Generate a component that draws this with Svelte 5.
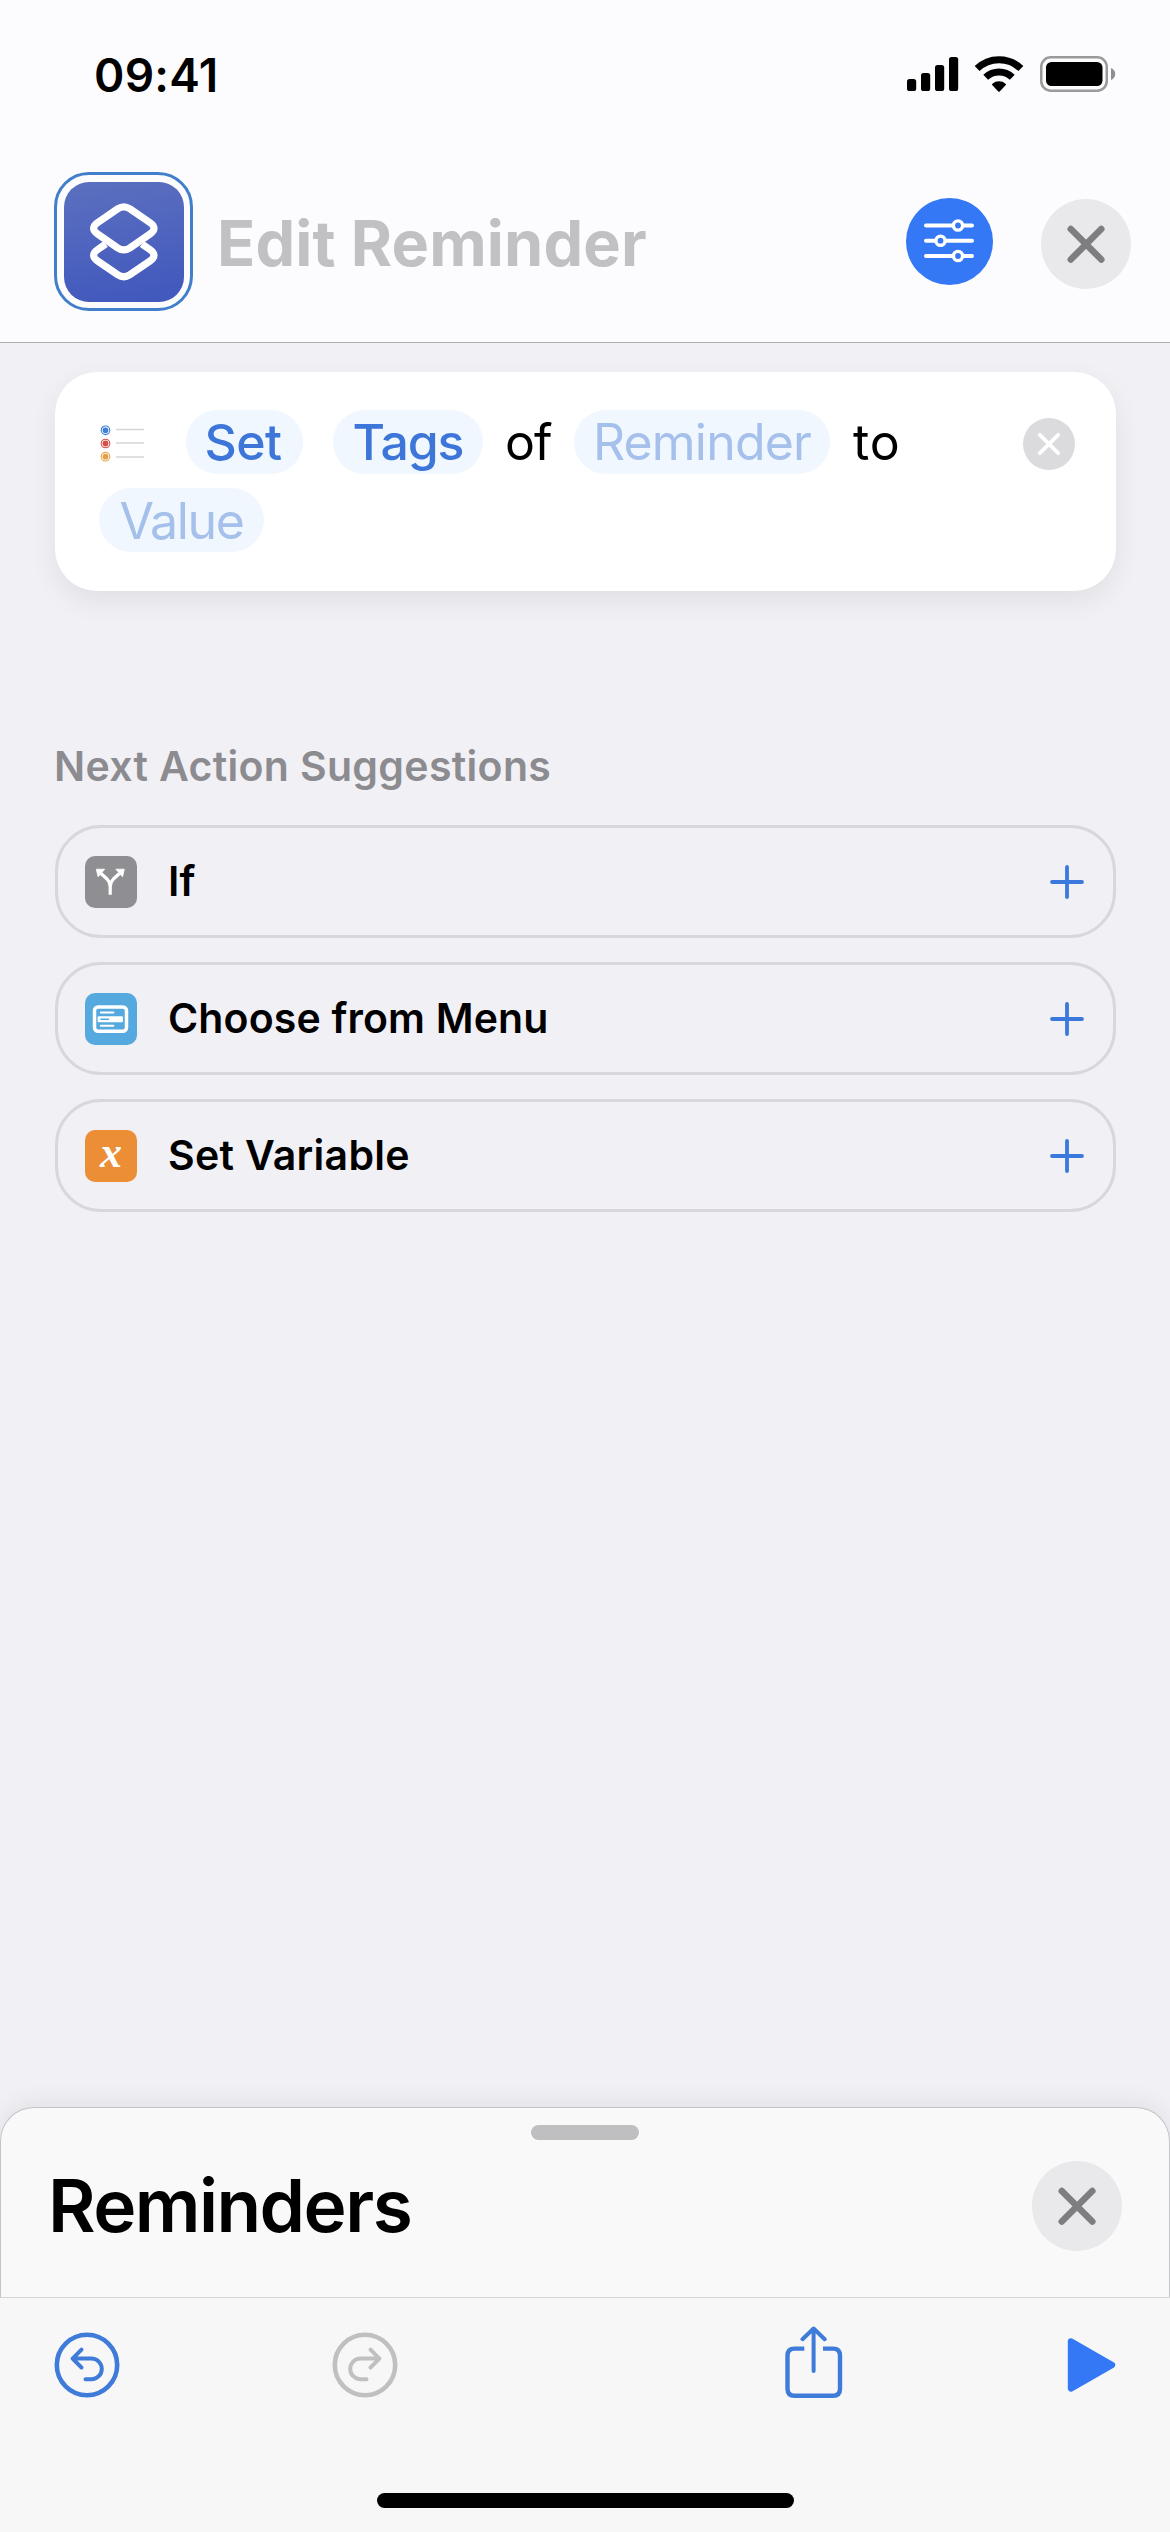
<script>
  const suggestions = [
    { label: 'If', icon: 'branch' },
    { label: 'Choose from Menu', icon: 'menu' },
    { label: 'Set Variable', icon: 'variable' }
  ];
</script>

{#snippet cross()}
  <svg width="90" height="90" viewBox="0 0 90 90">
    <path d="M29.800 30l30.500 30.500M60.300 30L29.800 60.500" stroke="#7e7e80" stroke-width="6.600" stroke-linecap="round" />
  </svg>
{/snippet}

<div class="screen">
  <header>
    <div class="status">
      <span class="time">09:41</span>
      <div class="indicators">
        <svg class="signal" width="52" height="36" viewBox="0 0 52 36">
          <rect x="0" y="24" width="9.200" height="12" rx="2.600" />
          <rect x="14" y="18" width="9.200" height="18" rx="2.600" />
          <rect x="28" y="10" width="9.200" height="26" rx="2.600" />
          <rect x="42" y="2" width="9.200" height="34" rx="2.600" />
        </svg>
        <svg class="wifi" width="50" height="38" viewBox="0 0 50 38">
          <g fill="none" stroke="#000" stroke-width="7">
            <path d="M3.100 13.600A31.500 31.500 0 0 1 46.900 13.600" />
            <path d="M11.700 22.200A19.500 19.500 0 0 1 38.300 22.200" />
          </g>
          <path d="M18.400 30.300a1 1 0 0 1 0-1.500 10 10 0 0 1 13.200 0 1 1 0 0 1 0 1.500l-5.900 6.200a1 1 0 0 1-1.400 0z" />
        </svg>
        <svg class="battery" width="76" height="36" viewBox="0 0 76 36">
          <rect x="1.250" y="1.250" width="65.500" height="33.500" rx="9.500" fill="none" stroke="#9a9a9b" stroke-width="2.500" />
          <rect x="6" y="6" width="56.500" height="24" rx="5.500" />
          <path d="M71 12c2.700 1 4.200 3.400 4.200 6s-1.500 5-4.200 6z" fill="#8f8f90" />
        </svg>
      </div>
    </div>
    <div class="titlebar">
      <div class="app-ring">
        <div class="app-icon">
          <svg width="120" height="120" viewBox="0 0 120 120" fill="none" stroke="#fff" stroke-width="7.200" stroke-linejoin="round">
            <path d="M53.800 26.800Q59.800 22.900 65.800 26.800L86 40.600Q94 46.300 86 52L65.800 66Q59.800 69.900 53.800 66L33.600 52Q25.600 46.300 33.600 40.600Z" />
            <path d="M41.700 62L33.600 67.600Q25.600 73.300 33.600 79L53.800 92.800Q59.800 96.700 65.800 92.800L86 79Q94 73.300 86 67.600L77.900 62" />
          </svg>
        </div>
      </div>
      <h1>Edit Reminder</h1>
      <button class="settings" aria-label="Settings">
        <svg width="87" height="87" viewBox="0 0 87 87" stroke="#fff" stroke-width="4" stroke-linecap="round">
          <path d="M20 27.500h46M20 42.700h46M20 58h46" />
          <g fill="#3478f6" stroke-width="3.400">
            <circle cx="52" cy="27.500" r="4.600" />
            <circle cx="34.500" cy="42.700" r="4.600" />
            <circle cx="52" cy="58" r="4.600" />
          </g>
        </svg>
      </button>
      <button class="close" aria-label="Close">{@render cross()}</button>
    </div>
  </header>

  <main>
    <section class="action">
      <div class="tokens">
        <svg class="list-icon" width="48" height="40" viewBox="0 0 48 40">
          <path d="M17 5.500h28M17 19h28M17 33h28" stroke="#d6d6d8" stroke-width="1.600" />
          <g fill="none" stroke-width="1.100">
            <circle cx="6.500" cy="6.300" r="4.300" stroke="#3f80d6" />
            <circle cx="6.500" cy="19.500" r="4.300" stroke="#d6504a" />
            <circle cx="6.500" cy="32.700" r="4.300" stroke="#eba544" />
          </g>
          <circle cx="6.500" cy="6.300" r="2.900" fill="#3f80d6" />
          <circle cx="6.500" cy="19.500" r="2.900" fill="#d6504a" />
          <circle cx="6.500" cy="32.700" r="2.900" fill="#e0a048" />
        </svg>
        <span class="pill set">Set</span>
        <span class="pill tags">Tags</span>
        <span class="word of">of</span>
        <span class="pill empty reminder">Reminder</span>
        <span class="word to">to</span>
      </div>
      <div class="tokens">
        <span class="pill empty value">Value</span>
      </div>
      <button class="remove" aria-label="Remove">
        <svg width="52" height="52" viewBox="0 0 52 52">
          <path d="M16.800 16.800l18.400 18.400M35.200 16.800L16.800 35.200" stroke="#fff" stroke-width="3.800" stroke-linecap="round" />
        </svg>
      </button>
    </section>

    <h2>Next Action Suggestions</h2>
    <ul>
      {#each suggestions as item}
        <li>
          <span class="tile {item.icon}">
            {#if item.icon === 'branch'}
              <svg width="52" height="52" viewBox="0 0 52 52">
                <path d="M25.200 38.800V31Q25.200 26.500 22 23L16 17.500M25.200 31Q25.200 26.500 28.400 23L34.400 17.500" fill="none" stroke="#fff" stroke-width="3.200" />
                <path d="M11.300 13.200h8.400l-6.600 7.600zM39.300 13.200h-8.400l6.600 7.600z" fill="#fff" stroke="#fff" stroke-width=".8" stroke-linejoin="round" />
              </svg>
            {:else if item.icon === 'menu'}
              <svg width="52" height="52" viewBox="0 0 52 52" fill="none" stroke="#fff">
                <rect x="9.500" y="13.900" width="32" height="24.300" rx="3.600" stroke-width="3.500" />
                <path d="M15.800 19.600h12.600M15.800 32.800h12.600" stroke-width="2" stroke-linecap="round" />
                <rect x="12.600" y="23.200" width="25.400" height="6" rx="1.200" fill="#fff" stroke="none" />
                <path d="M16 26.200h7.500" stroke="#55a9df" stroke-width="1.600" stroke-linecap="round" />
              </svg>
            {:else}
              <i>x</i>
            {/if}
          </span>
          <span class="label {item.icon}-label">{item.label}</span>
          <svg class="plus" width="34" height="34" viewBox="0 0 34 34">
            <path d="M2 17h30M17 2v30" stroke="#3b78dc" stroke-width="3.800" stroke-linecap="round" />
          </svg>
        </li>
      {/each}
    </ul>
  </main>

  <section class="sheet">
    <div class="grabber"></div>
    <div class="sheet-head">
      <h3>Reminders</h3>
      <button class="close" aria-label="Close">{@render cross()}</button>
    </div>
  </section>

  <footer>
    <div class="tools">
      <svg class="undo" width="66" height="66" viewBox="0 0 66 66" fill="none" stroke="#3f7bd9" stroke-width="4.600" stroke-linecap="round" stroke-linejoin="round">
        <circle cx="33" cy="33" r="30.200" />
        <path d="M27.500 17.700L18.600 26.600L27.500 35.500M18.600 26.600H37.500A10.300 10.300 0 0 1 37.500 47.200H31.500" stroke-width="4" />
      </svg>
      <svg class="redo" width="66" height="66" viewBox="0 0 66 66" fill="none" stroke="#c0c0c1" stroke-width="4.600" stroke-linecap="round" stroke-linejoin="round">
        <circle cx="33" cy="33" r="30.200" />
        <path d="M38.500 17.700L47.400 26.600L38.500 35.500M47.400 26.600H28.500A10.300 10.300 0 0 0 28.500 47.200H34.500" stroke-width="4" />
      </svg>
      <svg class="share" width="58" height="74" viewBox="0 0 58 74" fill="none" stroke="#3f7bd9" stroke-width="4.400" stroke-linejoin="round">
        <path d="M19.300 22.600H9.500Q2.500 22.600 2.500 29.600V62.800Q2.500 69.800 9.500 69.800H48Q55 69.800 55 62.800V29.600Q55 22.600 48 22.600H38" />
        <path d="M28.600 45V2.700M17.500 13.200L28.600 2.500L39.700 13.200" stroke-width="4" stroke-linecap="round" />
      </svg>
      <svg class="play" width="50" height="56" viewBox="0 0 50 56">
        <path d="M4 4.500L45 28L4 51.500Z" fill="#3478f6" stroke="#3478f6" stroke-width="6.400" stroke-linejoin="round" />
      </svg>
    </div>
    <div class="home"></div>
  </footer>
</div>

<style>
  :global(body) { background: #f1f0f5; }
  .screen {
    width: 1170px;
    height: 2532px;
    display: flex;
    flex-direction: column;
    overflow: hidden;
    background: #f1f0f5;
    color: #000;
    font-family: Inter, 'Liberation Sans', sans-serif;
  }
  h1, h2, h3, ul { margin: 0; padding: 0; }
  svg { display: block; flex: none; }
  button { border: 0; padding: 0; flex: none; display: block; border-radius: 50%; }

  header {
    height: 343px;
    box-sizing: border-box;
    flex: none;
    background: #fcfcfe;
    border-bottom: 1px solid #acadb1;
  }
  .status {
    height: 149px;
    display: flex;
    align-items: center;
    justify-content: space-between;
    padding: 0 54px 0 94px;
    box-sizing: border-box;
  }
  .time { font-size: 46px; font-weight: 600; letter-spacing: .3px; }
  .indicators { display: flex; align-items: center; margin-top: -1px; }
  .signal { margin: -2px 15px 0 0; }
  .wifi { margin-right: 16px; }
  .titlebar {
    display: flex;
    align-items: center;
    height: 192px;
    padding: 0 39px 0 54px;
    margin-top: -2px;
  }
  .app-ring {
    width: 139px;
    height: 139px;
    box-sizing: border-box;
    border: 3px solid #417fcb;
    border-radius: 35px;
    display: grid;
    place-items: center;
    margin-top: -3px;
  }
  .app-icon {
    width: 120px;
    height: 120px;
    border-radius: 25px;
    background: linear-gradient(170deg, #5c70bf, #4057bd);
  }
  h1 {
    flex: 1;
    margin-left: 24px;
    font-size: 63px;
    line-height: 76px;
    font-weight: 700;
    letter-spacing: .15px;
    color: #c1c1c3;
  }
  .settings { width: 87px; height: 87px; background: #3478f6; margin: -3px 48px 0 0; }
  .close { width: 90px; height: 90px; background: #e9e9eb; }
  .titlebar .close { margin-top: 2px; }

  main { flex: 1; padding: 29px 54px 0 55px; }
  .action {
    position: relative;
    height: 219px;
    box-sizing: border-box;
    padding: 38px 44px 0;
    border-radius: 42px;
    background: #fff;
    box-shadow: 0 10px 28px rgba(0, 0, 0, .07);
  }
  .tokens { display: flex; align-items: center; height: 64px; margin-bottom: 14px; font-size: 50px; line-height: 64px; }
  .list-icon { margin: 4px 39px 0 0; }
  .pill {
    height: 64px;
    box-sizing: border-box;
    border-radius: 32px;
    text-align: center;
    font-weight: 500;
    color: #3d76d8;
    background: #f0f7fe;
  }
  .pill.empty { font-weight: 400; color: #a5c0ea; }
  .set { width: 117px; padding-right: 3px; letter-spacing: -.6px; margin-right: 30px; }
  .tags { width: 150px; letter-spacing: -1.100px; margin-right: 22px; }
  .of { width: 47px; letter-spacing: -1px; margin-right: 22px; }
  .reminder { width: 256px; letter-spacing: -.8px; margin-right: 23px; }
  .to { letter-spacing: .8px; }
  .value { width: 165px; line-height: 66px; letter-spacing: -1.400px; }
  .remove { position: absolute; top: 46px; right: 41px; width: 52px; height: 52px; background: #dbdbdd; }

  h2 {
    margin: 150px 0 33px -1px;
    font-size: 41px;
    line-height: 51px;
    font-weight: 600;
    letter-spacing: .33px;
    color: #8b8b90;
  }
  ul { list-style: none; display: flex; flex-direction: column; gap: 24px; }
  li {
    height: 113px;
    box-sizing: border-box;
    border: 3px solid #d7d7dc;
    border-radius: 46px;
    display: flex;
    align-items: center;
    padding: 0 29px 0 27px;
  }
  .tile { width: 52px; height: 52px; border-radius: 10px; margin-right: 31px; flex: none; }
  .branch { background: #8e8e93; }
  .menu { background: #55a9df; }
  .variable { background: #ec8e36; text-align: center; }
  i { display: block; color: #fff; font: italic bold 44px/45px 'Liberation Serif', serif; }
  .label { flex: 1; font-size: 41px; line-height: 50px; font-weight: 600; letter-spacing: .15px; margin-top: -1px; }
  .variable-label { letter-spacing: .3px; }

  .sheet {
    height: 191px;
    flex: none;
    box-sizing: border-box;
    border: 1px solid #c3c3ca;
    border-bottom: 0;
    border-radius: 34px 34px 0 0;
    background: #f9f9f9;
    box-shadow: 0 -4px 24px rgba(0, 0, 20, .07);
    padding-top: 17px;
  }
  .grabber { width: 108px; height: 15px; border-radius: 7.500px; margin: 0 auto; background: #bfbfc1; }
  .sheet-head { display: flex; align-items: center; justify-content: space-between; height: 90px; padding: 0 47px; margin-top: 21px; }
  h3 { font-size: 73px; line-height: 90px; font-weight: 600; letter-spacing: -1.550px; }

  footer {
    height: 235px;
    margin-top: -1px;
    flex: none;
    box-sizing: border-box;
    position: relative;
    border-top: 1px solid #d4d4d6;
    background: #f7f7f8;
  }
  .tools { display: flex; align-items: center; height: 133px; padding: 0 53px 0 53.500px; }
  .redo { margin-left: 212px; }
  .share { margin-left: 387.500px; margin-top: -4px; }
  .play { margin-left: auto; }
  .home { width: 417px; height: 15px; border-radius: 8px; background: #000; margin: 62px auto 0; }
</style>
